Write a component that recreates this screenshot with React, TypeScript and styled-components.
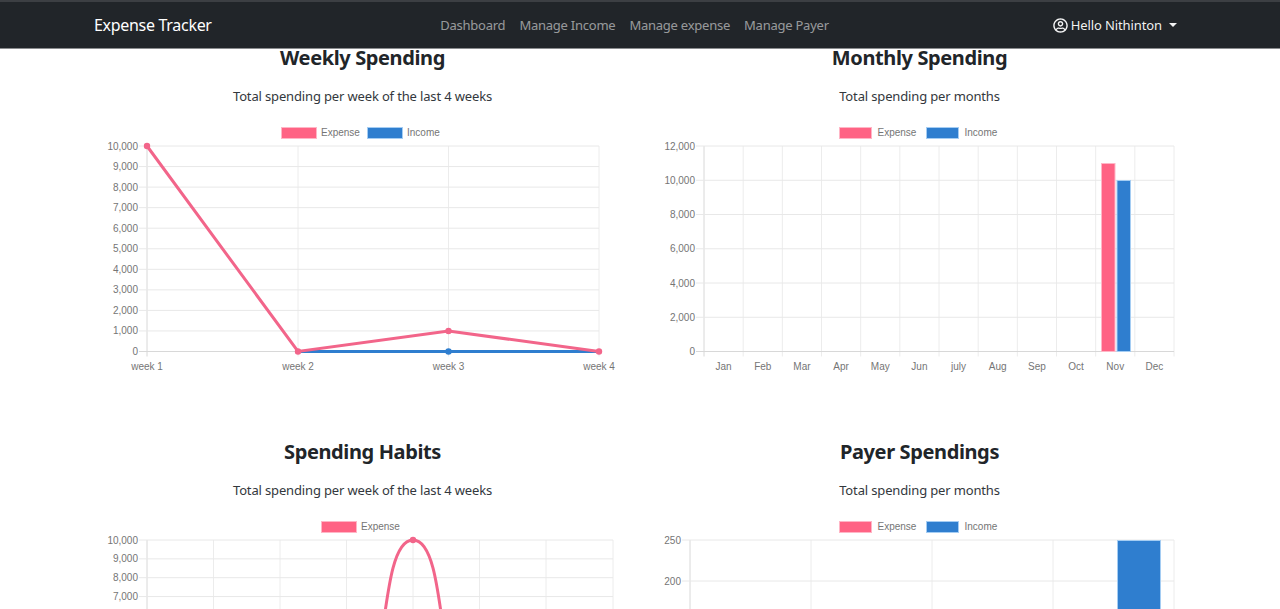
import styled, { createGlobalStyle } from "styled-components";
import { FaRegUserCircle } from "react-icons/fa";

const PINK = "#ff6384";
const PINK_EDGE = "#ffb6c6";
const BLUE = "#2f7ecf";
const BLUE_EDGE = "#a5cdf3";
const LINE_PINK = "#f2658a";

const GlobalStyle = createGlobalStyle`
  html, body {
    margin: 0;
    padding: 0;
    background: #fff;
    overflow: hidden;
  }
  body {
    font-family: "Noto Sans", "Open Sans", sans-serif;
    color: #212529;
  }
`;

const Page = styled.div`
  height: 609px;
  overflow: hidden;
`;
const Navbar = styled.nav`
  position: fixed;
  top: 0;
  left: 0;
  right: 0;
  z-index: 10;
  box-sizing: border-box;
  height: 49px;
  display: grid;
  grid-template-columns: 1fr auto 1fr;
  align-items: center;
  padding: 0 103px 0 94px;
  background: #212529;
  border-top: 2px solid #3c3f43;
  border-bottom: 1px solid #8a8c8e;
`;
const Brand = styled.a`
  color: #fff;
  font-size: 16px;
  letter-spacing: -0.3px;
`;
const NavLinks = styled.div`
  display: flex;
  gap: 14px;
  margin-left: -2px;
`;
const NavLink = styled.a`
  color: rgba(255, 255, 255, 0.55);
  font-size: 13px;
  letter-spacing: -0.24px;
`;
const UserMenu = styled.div`
  justify-self: end;
  display: flex;
  align-items: center;
  gap: 3px;
  color: rgba(255, 255, 255, 0.95);
  font-size: 13px;
  letter-spacing: -0.1px;
`;
const Caret = styled.span`
  width: 0;
  height: 0;
  margin-left: 4px;
  border-top: 4px solid rgba(255, 255, 255, 0.95);
  border-left: 4px solid transparent;
  border-right: 4px solid transparent;
`;
const Grid = styled.main`
  display: grid;
  grid-template-columns: 557px 557px;
  grid-auto-rows: 394px;
  padding: 45px 0 0 84px;
`;
const Section = styled.section`
  text-align: center;
`;
const Heading = styled.h2`
  margin: 0;
  font-size: 20px;
  line-height: 26px;
  font-weight: 700;
  letter-spacing: -0.38px;
`;
const Subheading = styled.p`
  margin: 15px 0 14px;
  font-size: 13px;
  line-height: 20px;
  letter-spacing: -0.15px;
  color: #33383d;
`;
const ChartSvg = styled.svg`
  display: block;
  width: 557px;
  height: 274px;
  font-family: "Liberation Sans", Arial, sans-serif;
  font-size: 10px;
`;
const Label = styled.text`
  fill: #757575;
`;

type Plot = { left: number; right: number; top: number; bottom: number };
type Legend = { label: string; color: string; edge: string; x: number; width: number };

type ChartProps = {
  plot: Plot;
  yTicks: { label: string; y: number }[];
  xLines: number[];
  xLabels?: { label: string; x: number }[];
  legend: Legend[];
  children: React.ReactNode;
};

function Chart({ plot, yTicks, xLines, xLabels, legend, children }: ChartProps) {
  return (
    <ChartSvg viewBox="0 0 557 274">
      {legend.map((item) => (
        <g key={item.label}>
          <rect
            x={item.x + 0.5}
            y={7.5}
            width={item.width - 1}
            height={11}
            fill={item.color}
            stroke={item.edge}
          />
          <Label x={item.x + item.width + (item.width === 33 ? 5.5 : 4)} y={15.5}>
            {item.label}
          </Label>
        </g>
      ))}
      {xLines.map((x, i) => (
        <line
          key={x}
          x1={x}
          x2={x}
          y1={plot.top}
          y2={plot.bottom + 5}
          stroke={i === 0 ? "#d8d8d8" : "#ececec"}
        />
      ))}
      {yTicks.map((tick) => (
        <g key={tick.label}>
          <line
            x1={plot.left - 8}
            x2={plot.right}
            y1={tick.y}
            y2={tick.y}
            stroke={tick.label === "0" ? "#d8d8d8" : "#e8e8e8"}
          />
          <Label x={plot.left - 9} y={tick.y + 3.5} textAnchor="end">
            {tick.label}
          </Label>
        </g>
      ))}
      {xLabels?.map((item) => (
        <Label key={item.label} x={item.x} y={plot.bottom + 18} textAnchor="middle">
          {item.label}
        </Label>
      ))}
      {children}
    </ChartSvg>
  );
}

function steps(max: number, step: number, top: number, pitch: number) {
  const ticks = [];
  for (let v = max, i = 0; v >= 0; v -= step, i++) {
    ticks.push({ label: v.toLocaleString("en-US"), y: top + i * pitch });
  }
  return ticks;
}

const weekX = [63, 214, 364.5, 515];
const monthLeft = 63;
const monthStep = (533 - 63) / 12;
const months = ["Jan", "Feb", "Mar", "Apr", "May", "Jun", "july", "Aug", "Sep", "Oct", "Nov", "Dec"];
const habitLines = [63, 129.5, 196, 262.5, 329, 395.5, 462, 529];
const payerLines = [49, 170, 291, 412, 533];

const Dot = ({ x, y, color }: { x: number; y: number; color: string }) => (
  <circle cx={x} cy={y} r={3.2} fill={color} />
);

const expenseIncome = (pinkX: number, blueX: number, width: number): Legend[] => [
  { label: "Expense", color: PINK, edge: PINK_EDGE, x: pinkX, width },
  { label: "Income", color: BLUE, edge: BLUE_EDGE, x: blueX, width },
];

export default function App() {
  return (
    <Page>
      <GlobalStyle />
      <Navbar>
        <Brand>Expense Tracker</Brand>
        <NavLinks>
          <NavLink>Dashboard</NavLink>
          <NavLink>Manage Income</NavLink>
          <NavLink>Manage expense</NavLink>
          <NavLink>Manage Payer</NavLink>
        </NavLinks>
        <UserMenu>
          <FaRegUserCircle size={15} />
          Hello Nithinton
          <Caret />
        </UserMenu>
      </Navbar>
      <Grid>
        <Section>
          <Heading>Weekly Spending</Heading>
          <Subheading>Total spending per week of the last 4 weeks</Subheading>
          <Chart
            plot={{ left: 63, right: 515, top: 26, bottom: 231.5 }}
            yTicks={steps(10000, 1000, 26, 20.55)}
            xLines={weekX}
            xLabels={weekX.map((x, i) => ({ label: `week ${i + 1}`, x }))}
            legend={expenseIncome(197, 283, 36)}
          >
            <polyline
              points="214,231.5 364.5,231.5 515,231.5"
              fill="none"
              stroke={BLUE}
              strokeWidth={3}
            />
            <Dot x={364.5} y={231.5} color={BLUE} />
            <polyline
              points="63,26 214,231.5 364.5,211 515,231.5"
              fill="none"
              stroke={LINE_PINK}
              strokeWidth={3}
            />
            <Dot x={63} y={26} color={LINE_PINK} />
            <Dot x={214} y={231.5} color={LINE_PINK} />
            <Dot x={364.5} y={211} color={LINE_PINK} />
            <Dot x={515} y={231.5} color={LINE_PINK} />
          </Chart>
        </Section>
        <Section>
          <Heading>Monthly Spending</Heading>
          <Subheading>Total spending per months</Subheading>
          <Chart
            plot={{ left: 63, right: 533, top: 26, bottom: 231.5 }}
            yTicks={steps(12000, 2000, 26, 34.25)}
            xLines={Array.from({ length: 13 }, (_, i) => monthLeft + i * monthStep)}
            xLabels={months.map((label, i) => ({
              label,
              x: monthLeft + (i + 0.5) * monthStep,
            }))}
            legend={expenseIncome(198, 285, 33)}
          >
            <rect x={460.5} y={43.5} width={13.5} height={188} fill={PINK} stroke={PINK_EDGE} />
            <rect x={476} y={60.5} width={13.5} height={171} fill={BLUE} stroke={BLUE_EDGE} />
          </Chart>
        </Section>
        <Section>
          <Heading>Spending Habits</Heading>
          <Subheading>Total spending per week of the last 4 weeks</Subheading>
          <Chart
            plot={{ left: 63, right: 529, top: 26, bottom: 231.5 }}
            yTicks={steps(10000, 1000, 26, 18.85).slice(0, 4)}
            xLines={habitLines}
            legend={[{ label: "Expense", color: PINK, edge: PINK_EDGE, x: 237, width: 36 }]}
          >
            <path
              d="M296 135 C304 75, 309 26, 329 26 C349 26, 354 75, 362 135"
              fill="none"
              stroke={LINE_PINK}
              strokeWidth={3}
            />
            <Dot x={329} y={26} color={LINE_PINK} />
          </Chart>
        </Section>
        <Section>
          <Heading>Payer Spendings</Heading>
          <Subheading>Total spending per months</Subheading>
          <Chart
            plot={{ left: 49, right: 533, top: 26, bottom: 231.5 }}
            yTicks={steps(250, 50, 26, 41).slice(0, 2)}
            xLines={payerLines}
            legend={expenseIncome(198, 285, 33)}
          >
            <rect x={476.5} y={26.5} width={43} height={200} fill={BLUE} stroke={BLUE_EDGE} />
          </Chart>
        </Section>
      </Grid>
    </Page>
  );
}
